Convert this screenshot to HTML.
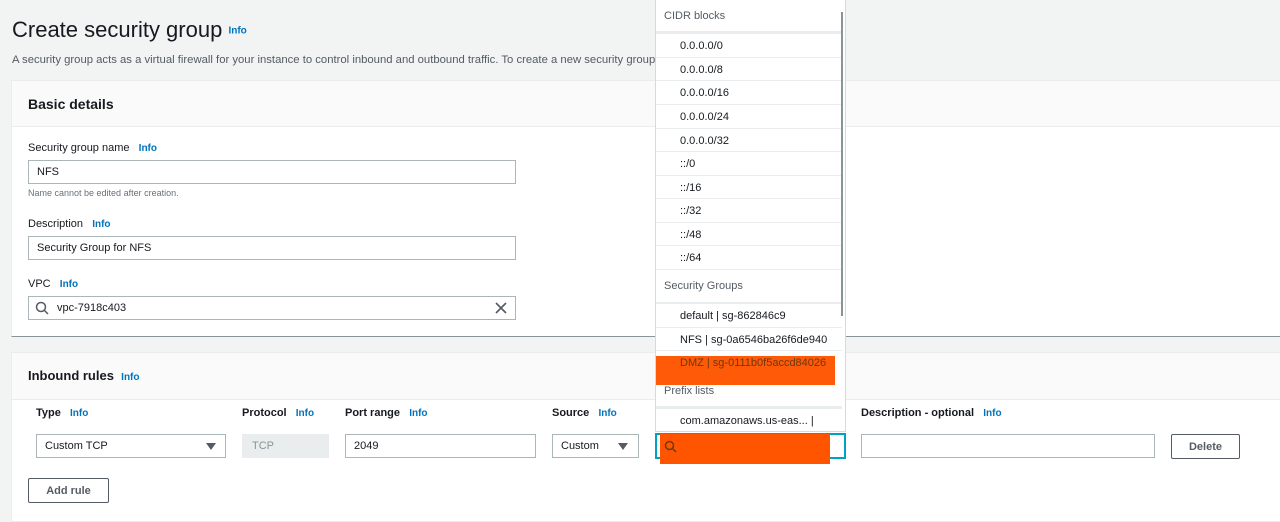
<!DOCTYPE html>
<html><head><style>
*{box-sizing:border-box;margin:0;padding:0}
body{width:1280px;height:517px;overflow:hidden;background:#f2f3f3;font-family:"Liberation Sans",sans-serif;color:#16191f;position:relative;font-size:11px}
.a{position:absolute}
.info{color:#0073bb;font-weight:bold;font-size:10px}
.lbl{font-size:11px}
.inp{position:absolute;background:#fff;border:1px solid #aab7b8;height:24px;font-size:11px;padding:5px 8px}
.b{font-weight:bold}
.it{position:absolute;left:0;width:186px;height:24px;border-top:1px solid #eaeded;padding:6px 0 0 24px;font-size:11px;color:#16191f}
.sec{position:absolute;left:0;width:186px;color:#545b64;font-size:11px;padding-left:8px}
</style></head><body>
<div class="a" style="left:12px;top:17px;font-size:22px;color:#16191f">Create security group <span class="info" style="font-size:10px;vertical-align:middle">Info</span></div>
<div class="a" style="left:12px;top:54px;font-size:11.3px;color:#545b64;white-space:nowrap">A security group acts as a virtual firewall for your instance to control inbound and outbound traffic. To create a new security group</div>

<div class="a" style="left:11px;top:80px;width:1280px;height:257px;background:#fff;border:1px solid #eaeded;border-bottom:1px solid #879596"></div>
<div class="a" style="left:12px;top:81px;width:1270px;height:46px;background:#fafafa;border-bottom:1px solid #eaeded"></div>
<div class="a b" style="left:28px;top:96px;font-size:14px">Basic details</div>
<div class="a lbl" style="left:28px;top:142px">Security group name &nbsp;&nbsp;<span class="info">Info</span></div>
<div class="inp" style="left:28px;top:160px;width:488px">NFS</div>
<div class="a" style="left:28px;top:188px;font-size:9px;color:#687078">Name cannot be edited after creation.</div>
<div class="a lbl" style="left:28px;top:218px">Description &nbsp;&nbsp;<span class="info">Info</span></div>
<div class="inp" style="left:28px;top:236px;width:488px">Security Group for NFS</div>
<div class="a lbl" style="left:28px;top:278px">VPC &nbsp;&nbsp;<span class="info">Info</span></div>
<div class="inp" style="left:28px;top:296px;width:488px;padding-left:28px">vpc-7918c403</div>
<svg class="a" style="left:35px;top:301px" width="14" height="14"><circle cx="6" cy="6" r="4.5" fill="none" stroke="#545b64" stroke-width="1.5"/><path d="M9.5 9.5L13 13" stroke="#545b64" stroke-width="1.5"/></svg>
<svg class="a" style="left:495px;top:302px" width="12" height="12"><path d="M1 1L11 11M11 1L1 11" stroke="#545b64" stroke-width="1.6"/></svg>

<div class="a" style="left:11px;top:352px;width:1280px;height:170px;background:#fff;border:1px solid #eaeded"></div>
<div class="a" style="left:12px;top:353px;width:1270px;height:47px;background:#fafafa;border-bottom:1px solid #eaeded"></div>
<div class="a b" style="left:28px;top:368px;font-size:13px">Inbound rules &nbsp;<span class="info">Info</span></div>
<div class="a b" style="left:36px;top:407px">Type &nbsp;&nbsp;<span class="info">Info</span></div>
<div class="a b" style="left:242px;top:407px">Protocol &nbsp;&nbsp;<span class="info">Info</span></div>
<div class="a b" style="left:345px;top:407px">Port range &nbsp;&nbsp;<span class="info">Info</span></div>
<div class="a b" style="left:552px;top:407px">Source &nbsp;&nbsp;<span class="info">Info</span></div>
<div class="a b" style="left:861px;top:407px">Description - optional &nbsp;&nbsp;<span class="info">Info</span></div>
<div class="inp" style="left:36px;top:434px;width:190px">Custom TCP</div>
<div class="a" style="left:206px;top:443px;width:0;height:0;border-left:5px solid transparent;border-right:5px solid transparent;border-top:7px solid #545b64"></div>
<div class="a" style="left:242px;top:434px;width:87px;height:24px;background:#eaeded;color:#879596;padding:6px 10px">TCP</div>
<div class="inp" style="left:345px;top:434px;width:191px">2049</div>
<div class="inp" style="left:552px;top:434px;width:87px">Custom</div>
<div class="a" style="left:618px;top:443px;width:0;height:0;border-left:5px solid transparent;border-right:5px solid transparent;border-top:7px solid #545b64"></div>
<div class="inp" style="left:861px;top:434px;width:294px"></div>
<div class="a b" style="left:1171px;top:434px;width:69px;height:25px;border:1px solid #545b64;border-radius:2px;text-align:center;padding-top:6px;color:#545b64">Delete</div>
<div class="a b" style="left:28px;top:478px;width:81px;height:25px;border:1px solid #545b64;border-radius:2px;text-align:center;padding-top:6px;color:#545b64">Add rule</div>

<div class="a" style="left:655px;top:0;width:191px;height:432px;background:#fff;border:1px solid #d5dbdb;border-top:none;overflow:hidden">
<div class="sec" style="top:10px">CIDR blocks</div>
<div class="a" style="left:0;top:31px;width:186px;height:2px;background:#eaeded"></div>
<div class="it" style="top:33px">0.0.0.0/0</div>
<div class="it" style="top:57px">0.0.0.0/8</div>
<div class="it" style="top:80px">0.0.0.0/16</div>
<div class="it" style="top:104px">0.0.0.0/24</div>
<div class="it" style="top:128px">0.0.0.0/32</div>
<div class="it" style="top:151px">::/0</div>
<div class="it" style="top:175px">::/16</div>
<div class="it" style="top:198px">::/32</div>
<div class="it" style="top:222px">::/48</div>
<div class="it" style="top:245px">::/64</div>
<div class="sec" style="top:269px;border-top:1px solid #eaeded;width:186px;padding-top:10px;height:33px">Security Groups</div>
<div class="a" style="left:0;top:302px;width:186px;height:2px;background:#eaeded"></div>
<div class="it" style="top:303px">default | sg-862846c9</div>
<div class="it" style="top:327px">NFS | sg-0a6546ba26f6de940</div>
<div class="it" style="top:350px">DMZ | sg-0111b0f5accd84026</div>
<div class="a" style="left:0;top:356px;width:179px;height:29px;background:#ff5500;opacity:.97"></div>
<div class="a" style="left:24px;top:357px;font-size:11px;color:#6b3a10">DMZ | sg-0111b0f5accd84026</div>
<div class="sec" style="top:384px;width:186px;padding-top:1px;height:22px">Prefix lists</div>
<div class="a" style="left:0;top:406px;width:186px;height:2px;background:#eaeded"></div>
<div class="it" style="top:408px">com.amazonaws.us-eas... |</div>
<div class="a" style="left:185px;top:12px;width:2px;height:304px;background:#879596"></div>
</div>
<div class="a" style="left:655px;top:433px;width:191px;height:26px;border:2px solid #00a1c9;background:#fff"></div>
<div class="a" style="left:660px;top:434px;width:170px;height:30px;background:#ff5500"></div>
<svg class="a" style="left:664px;top:440px" width="13" height="13"><circle cx="5.5" cy="5.5" r="4" fill="none" stroke="#6b3a10" stroke-width="1.5"/><path d="M8.5 8.5L12 12" stroke="#6b3a10" stroke-width="1.5"/></svg>
</body></html>
